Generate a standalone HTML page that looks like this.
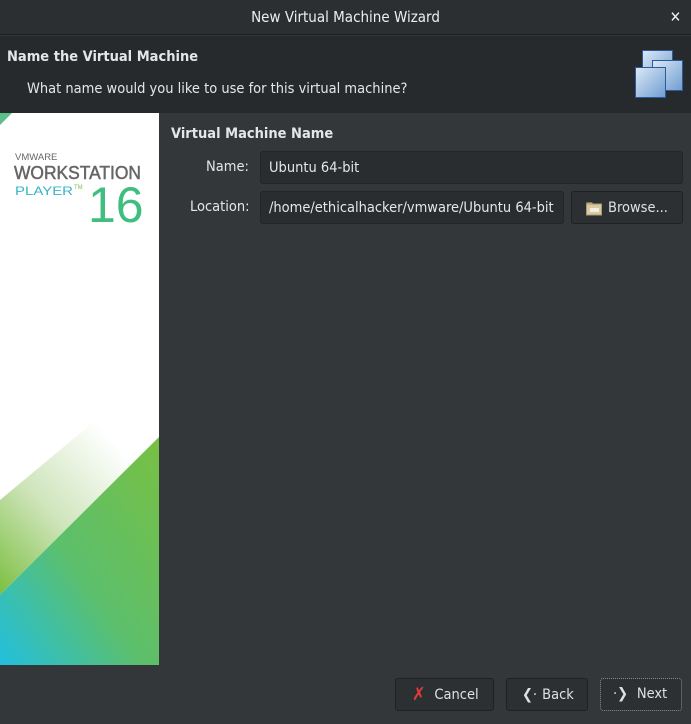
<!DOCTYPE html>
<html><head><meta charset="utf-8"><style>
*{margin:0;padding:0;box-sizing:border-box}
body{width:691px;height:724px;background:#33373a;font-family:"DejaVu Sans Condensed","DejaVu Sans","Liberation Sans",sans-serif;font-stretch:condensed;color:#e6e6e6;position:relative;overflow:hidden;font-size:14.5px;white-space:nowrap}
.abs{position:absolute}
.title{left:0;top:0;width:691px;height:35px;background:#2c2f32;border-bottom:1px solid #1c1e20;text-align:center;line-height:34px;font-size:15px;color:#eee}
.hdr{left:0;top:36px;width:691px;height:77px;background:#272a2d}
.inp{background:#2a2d30;border:1px solid #232527;border-radius:3px;color:#e6e6e6;font-size:14.5px;padding-left:8px;line-height:32px;overflow:hidden}
.btn{background:#2d3033;border:1px solid #1f2123;border-radius:3px;font-size:14.5px;color:#e0e0e0;line-height:30px;text-align:center}
</style></head><body>
<div class="abs title">New Virtual Machine Wizard<span class="abs" style="right:10px;top:0;font-size:15px;font-weight:bold">✕</span></div>
<div class="abs hdr">
<div class="abs" style="left:7px;top:13px;font-weight:bold">Name the Virtual Machine</div>
<div class="abs" style="left:27px;top:45px">What name would you like to use for this virtual machine?</div>
</div>
<svg class="abs" style="left:630px;top:45px" width="55" height="58">
<defs><linearGradient id="g" x1="0" y1="0" x2="1" y2="1"><stop offset="0" stop-color="#dce9f7"/><stop offset="1" stop-color="#6f9dd0"/></linearGradient></defs>
<rect x="12.5" y="5.5" width="30" height="30" fill="url(#g)" stroke="#2a5a9a"/>
<rect x="22.5" y="15.5" width="30" height="30" fill="url(#g)" stroke="#2a5a9a"/>
<rect x="5.5" y="22.5" width="30" height="30" fill="url(#g)" stroke="#2a5a9a"/>
</svg>
<svg class="abs" style="left:0;top:113px" width="159" height="552">
<defs>
<linearGradient id="m" x1="0" y1="1" x2="1" y2="0"><stop offset="0" stop-color="#22bfe0"/><stop offset="0.45" stop-color="#5cbf6c"/><stop offset="1" stop-color="#78c043"/></linearGradient>
<linearGradient id="l" x1="0" y1="1" x2="0.7" y2="0.2"><stop offset="0" stop-color="#7cbf40"/><stop offset="0.5" stop-color="#cfe5bc"/><stop offset="1" stop-color="#ffffff"/></linearGradient>
</defs>
<rect width="159" height="552" fill="#fff"/>
<polygon points="0,0 12,0 0,12" fill="#5cbf8a"/>
<polygon points="0,387 120,287 159,287 159,324 0,482" fill="url(#l)"/>
<polygon points="159,324 159,552 0,552 0,482" fill="url(#m)"/>
<text x="15" y="47" font-family="Liberation Sans,sans-serif" font-size="9.5" fill="#666">VMWARE</text>
<text x="14" y="66" font-family="Liberation Sans,sans-serif" font-size="18" fill="#666" stroke="#666" stroke-width="0.5" textLength="127" lengthAdjust="spacingAndGlyphs">WORKSTATION</text>
<text x="15" y="82" font-family="Liberation Sans,sans-serif" font-size="12" fill="#34b6c4" textLength="58" lengthAdjust="spacingAndGlyphs">PLAYER</text>
<text x="74" y="76" font-family="Liberation Sans,sans-serif" font-size="6" fill="#7cbf50">TM</text>
<text x="88" y="109" font-family="Liberation Sans,sans-serif" font-size="50" fill="#3fbe80">16</text>
</svg>
<div class="abs" style="left:171px;top:126px;font-weight:bold">Virtual Machine Name</div>
<div class="abs" style="left:206px;top:159px">Name:</div>
<div class="abs inp" style="left:260px;top:151px;width:423px;height:33px">Ubuntu 64-bit</div>
<div class="abs" style="left:190px;top:199px">Location:</div>
<div class="abs inp" style="left:260px;top:191px;width:304px;height:33px">/home/ethicalhacker/vmware/Ubuntu 64-bit</div>
<div class="abs btn" style="left:571px;top:191px;width:112px;height:33px;line-height:32px;padding-left:22px">Browse...
<svg class="abs" style="left:14px;top:9px" width="16" height="15"><rect x="0.5" y="1.5" width="6" height="3" fill="#c9b991"/><rect x="0.5" y="3" width="15" height="11" fill="#d8cba2" stroke="#a8996f"/><rect x="4" y="7" width="9" height="4" fill="#f3efe0"/></svg></div>
<div class="abs btn" style="left:395px;top:678px;width:99px;height:33px;line-height:32px;padding-left:24px">Cancel
<span class="abs" style="left:16px;top:0;color:#e63a3a;font-weight:bold;font-size:18px">✗</span></div>
<div class="abs btn" style="left:506px;top:678px;width:82px;height:33px;line-height:32px;padding-left:22px">Back
<span class="abs" style="left:15px;top:0">❮·</span></div>
<div class="abs btn" style="left:600px;top:678px;width:82px;height:33px;line-height:30px;padding-left:22px;border:1px dotted #8a8d90">Next
<span class="abs" style="left:12px;top:0">·❯</span></div>
</body></html>
